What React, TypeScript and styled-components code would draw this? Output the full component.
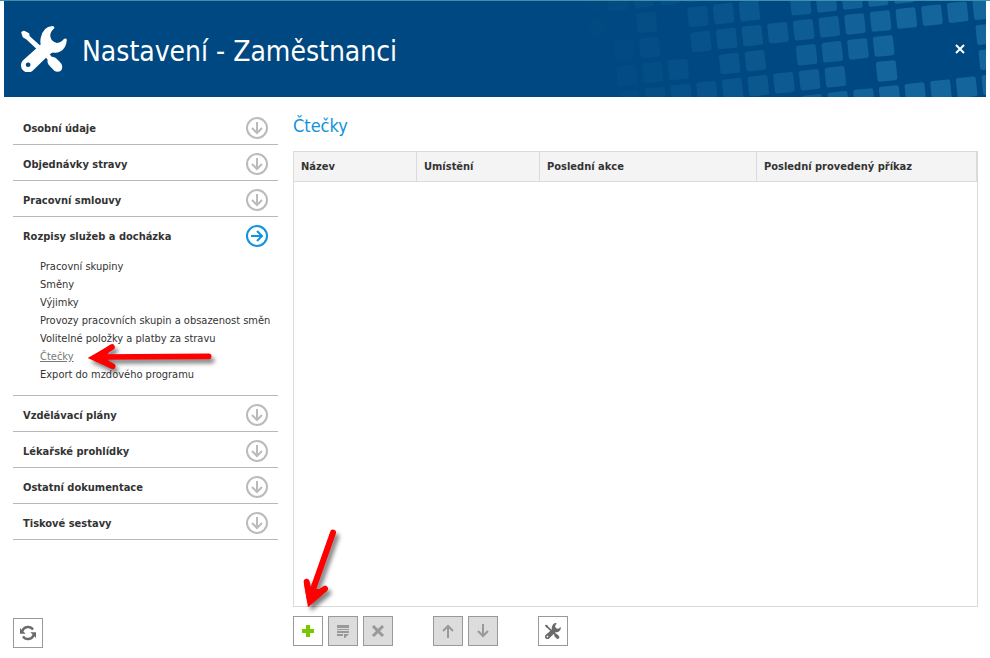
import React from "react";
import styled, { createGlobalStyle } from "styled-components";

const Global = createGlobalStyle`
  * { box-sizing: border-box; }
  body {
    margin: 0;
    background: #fff;
    color: #333;
    font-family: "DejaVu Sans Condensed", "DejaVu Sans", sans-serif;
    font-size: 11px;
  }
  button { font: inherit; color: inherit; cursor: pointer; }
`;

const Page = styled.div`
  display: flex;
  flex-direction: column;
  min-height: 100vh;
  border-top: 1px solid #3c93a8;
`;

const Header = styled.header`
  position: relative;
  display: flex;
  align-items: center;
  gap: 15px;
  height: 96px;
  margin: 0 4px;
  padding: 0 20px 0 17px;
  background: #004881;
  color: #fff;
  overflow: hidden;
`;

const HeaderPattern = styled.svg`
  position: absolute;
  top: 0;
  right: 0;
  width: 396px;
  height: 96px;
`;

const HeaderTitle = styled.h1`
  flex: 1;
  margin: 0;
  padding-top: 5px;
  font-size: 28px;
  line-height: 34px;
  font-weight: 400;
  white-space: nowrap;
`;

const CloseButton = styled.button`
  position: relative;
  display: flex;
  padding: 0;
  border: 0;
  background: none;
`;

const Body = styled.div`
  flex: 1;
  display: flex;
  gap: 15px;
  padding: 12px 12px 10px 13px;
`;

const Sidebar = styled.aside`
  flex: 0 0 265px;
  min-width: 0;
  display: flex;
  flex-direction: column;
  justify-content: space-between;
`;

const Section = styled.div`
  border-bottom: 1px solid #b8b8b8;
`;

const SectionButton = styled.button`
  display: flex;
  align-items: center;
  justify-content: space-between;
  width: 100%;
  height: 35px;
  padding: 2px 10px 0;
  border: 0;
  background: none;
  font-weight: 700;
  text-align: left;
`;

const SectionLabel = styled.span`
  padding-top: 2px;
`;

const SubList = styled.ul`
  margin: 0;
  padding: 6px 0 11px 27px;
  list-style: none;
`;

const SubItem = styled.li`
  position: relative;
  height: 18px;
  line-height: 18px;
  white-space: nowrap;
`;

const SubLink = styled.a<{ $current?: boolean }>`
  color: ${(p) => (p.$current ? "#777" : "#333")};
  text-decoration: ${(p) => (p.$current ? "underline" : "none")};
`;

const Main = styled.main`
  flex: 1;
  min-width: 0;
  display: flex;
  flex-direction: column;
  padding-bottom: 2px;
`;

const PageTitle = styled.h2`
  margin: 0;
  height: 42px;
  color: #0e93de;
  font-size: 18px;
  line-height: 34px;
  font-weight: 400;
`;

const TableFrame = styled.div`
  flex: 1;
  border: 1px solid #dadada;
`;

const Table = styled.table`
  width: 100%;
  table-layout: fixed;
  border-collapse: separate;
  border-spacing: 0;
`;

const HeadCell = styled.th<{ $width?: number }>`
  width: ${(p) => (p.$width ? `${p.$width}px` : "auto")};
  height: 30px;
  padding: 0 7px;
  border-right: 1px solid #dadada;
  border-bottom: 1px solid #dadada;
  background: #f4f4f4;
  font-weight: 700;
  text-align: left;
  white-space: nowrap;
`;

const Toolbar = styled.div`
  display: flex;
  gap: 40px;
  padding-top: 9px;
`;

const ToolGroup = styled.div`
  display: flex;
  gap: 5px;
`;

const ToolButton = styled.button`
  position: relative;
  display: flex;
  align-items: center;
  justify-content: center;
  width: 30px;
  height: 30px;
  padding: 0;
  border: 1px solid #999;
  background: #fff;
  color: #6b6b6b;
  &:disabled {
    background: #dcdcdc;
    color: #999;
    cursor: default;
  }
`;

const Pointer = styled.svg`
  position: absolute;
  overflow: visible;
  pointer-events: none;
  filter: drop-shadow(3px 4px 2px rgba(0, 0, 0, 0.5));
`;

const LinkPointer = styled(Pointer)`
  left: 41px;
  top: -13px;
`;

const AddPointer = styled(Pointer)`
  left: 3px;
  top: -97px;
`;

/* Filled cells of the slanted grid: row number -> column numbers. */
const cells: Record<string, number[]> = {
  "-2": [-11, -10, -9, -8, -7],
  "-1": [-11, -9, -7, -6, -5, -3, -2, -1, 0, 1],
  "0": [-10, -9, -7, -6, -5, -4, -3, -2, -1, 0, 1, 2, 3, 4],
  "1": [-10, -9, -8, -6, -5, -3, -2, -1, 0, 4],
  "2": [-10, -9, -8, -7, -6, -5, -4, -3, -2, 0, 4],
  "3": [-3, -2, -1, 0, 1, 2, 3, 4],
};

const Pattern = () => (
  <HeaderPattern viewBox="0 3 1188 288" aria-hidden="true">
    {Object.entries(cells).flatMap(([row, cols]) =>
      cols.map((i) => {
        const j = Number(row);
        const x = 872 + 77 * i + 9 * j;
        const y = 63 - 8.8 * i + 75 * j;
        const opacity = Math.min(1, Math.max(0.04, x / 900));
        return (
          <rect
            key={`${i}:${j}`}
            x={-30}
            y={-30}
            width={60}
            height={60}
            rx={7}
            fill="#14659c"
            opacity={opacity}
            transform={`translate(${x} ${y}) rotate(-6)`}
          />
        );
      })
    )}
  </HeaderPattern>
);

const ToolsIcon = ({ size }: { size: number }) => (
  <svg width={size} height={size} viewBox="33 32 138 139" fill="currentColor" aria-hidden="true">
    <path
      fillRule="evenodd"
      d="M127 32Q135 33 133 39Q120 50 121 63Q124 80 141 83Q155 81 162 71Q170 67 171 74Q169 99 151 109Q140 115 128 112L119 117L70 165A21 21 0 0 1 38 136L92 88Q90 78 92 68Q99 34 127 32ZM54 142a7 7 0 1 0 .1 0Z"
    />
    <path d="M33 52Q36 45 44 47L57 54L59 63L97 97L87 108L49 73L38 66Z" />
    <path d="M100 117L113 106L124 124L135 127Q141 130 155 147Q160 159 153 167Q143 174 133 167L116 149Q111 142 113 134Z" />
  </svg>
);

const CircleArrow = ({ active }: { active?: boolean }) => (
  <svg width="22" height="22" viewBox="0 0 22 22" fill="none" stroke={active ? "#0e93de" : "#bbb"} strokeWidth="2" aria-hidden="true">
    <circle cx="11" cy="11" r="10" />
    {active ? <path d="M5 11H16M11 6L16 11L11 16" /> : <path d="M11 5V16M6 11L11 16L16 11" />}
  </svg>
);

const RefreshIcon = () => (
  <svg width="16" height="16" viewBox="60 74 48 48" fill="none" stroke="currentColor" strokeWidth="7" aria-hidden="true">
    <path d="M67 92A18 18 0 0 1 99 88M101 104A18 18 0 0 1 69 108" />
    <path d="M60 83V100H77ZM108 113V96H91Z" fill="currentColor" stroke="none" />
  </svg>
);

const PlusIcon = () => (
  <svg width="12" height="12" viewBox="0 0 12 12" aria-hidden="true">
    <path d="M4 0H8V4H12V8H8V12H4V8H0V4H4Z" fill="#78c800" />
  </svg>
);

const NoteIcon = () => (
  <svg width="14" height="14" viewBox="0 0 14 14" fill="currentColor" aria-hidden="true">
    <path d="M1 1H13V4H1ZM1 5H13V6H1ZM1 7H13V9H1ZM1 10H7V12H1ZM8 10H13L9 14H8Z" />
  </svg>
);

const CrossIcon = () => (
  <svg width="14" height="14" viewBox="0 0 14 14" stroke="currentColor" strokeWidth="3" aria-hidden="true">
    <path d="M2 2L12 12M12 2L2 12" />
  </svg>
);

const ArrowIcon = ({ down }: { down?: boolean }) => (
  <svg width="14" height="14" viewBox="0 0 14 14" fill="none" stroke="currentColor" strokeWidth="2" aria-hidden="true">
    <path d={down ? "M7 0V12M2 7L7 12L12 7" : "M7 14V2M2 7L7 2L12 7"} />
  </svg>
);

const subItems = [
  "Pracovní skupiny",
  "Směny",
  "Výjimky",
  "Provozy pracovních skupin a obsazenost směn",
  "Volitelné položky a platby za stravu",
  "Čtečky",
  "Export do mzdového programu",
];

const sections = [
  { label: "Osobní údaje" },
  { label: "Objednávky stravy" },
  { label: "Pracovní smlouvy" },
  { label: "Rozpisy služeb a docházka", items: subItems },
  { label: "Vzdělávací plány" },
  { label: "Lékařské prohlídky" },
  { label: "Ostatní dokumentace" },
  { label: "Tiskové sestavy" },
];

export default function App() {
  return (
    <Page>
      <Global />
      <Header>
        <Pattern />
        <ToolsIcon size={46} />
        <HeaderTitle>Nastavení - Zaměstnanci</HeaderTitle>
        <CloseButton aria-label="Zavřít">
          <svg width="12" height="12" viewBox="0 0 12 12" stroke="#fff" strokeWidth="2" aria-hidden="true">
            <path d="M2 2L10 10M10 2L2 10" />
          </svg>
        </CloseButton>
      </Header>
      <Body>
        <Sidebar>
          <nav>
            {sections.map(({ label, items }) => (
              <Section key={label}>
                <SectionButton aria-expanded={!!items}>
                  <SectionLabel>{label}</SectionLabel>
                  <CircleArrow active={!!items} />
                </SectionButton>
                {items && (
                  <SubList>
                    {items.map((item) => (
                      <SubItem key={item}>
                        <SubLink href="#" $current={item === "Čtečky"}>
                          {item}
                        </SubLink>
                        {item === "Čtečky" && (
                          <LinkPointer width="140" height="45" viewBox="0 0 420 135" fill="none" stroke="#f00" strokeWidth="17" strokeLinecap="round" strokeLinejoin="round" aria-hidden="true">
                            <path d="M60 66L383 64" />
                            <path d="M93 36L45 67L95 94" />
                            <path d="M20 69L90 29L78 65L92 101Z" fill="#f00" stroke="none" />
                          </LinkPointer>
                        )}
                      </SubItem>
                    ))}
                  </SubList>
                )}
              </Section>
            ))}
          </nav>
          <ToolButton aria-label="Obnovit">
            <RefreshIcon />
          </ToolButton>
        </Sidebar>
        <Main>
          <PageTitle>Čtečky</PageTitle>
          <TableFrame>
            <Table>
              <thead>
                <tr>
                  <HeadCell $width={123}>Název</HeadCell>
                  <HeadCell $width={123}>Umístění</HeadCell>
                  <HeadCell $width={217}>Poslední akce</HeadCell>
                  <HeadCell>Poslední provedený příkaz</HeadCell>
                </tr>
              </thead>
            </Table>
          </TableFrame>
          <Toolbar>
            <ToolGroup>
              <ToolButton aria-label="Přidat">
                <PlusIcon />
                <AddPointer width="50" height="90" viewBox="0 0 150 270" fill="none" stroke="#f00" strokeWidth="18" strokeLinecap="round" strokeLinejoin="round" aria-hidden="true">
                  <path d="M108 38L46 214" />
                  <path d="M29 185L38 236L84 206" />
                  <path d="M33 262L21 190L52 205L90 213Z" fill="#f00" stroke="none" />
                </AddPointer>
              </ToolButton>
              <ToolButton aria-label="Upravit" disabled>
                <NoteIcon />
              </ToolButton>
              <ToolButton aria-label="Smazat" disabled>
                <CrossIcon />
              </ToolButton>
            </ToolGroup>
            <ToolGroup>
              <ToolButton aria-label="Posunout nahoru" disabled>
                <ArrowIcon />
              </ToolButton>
              <ToolButton aria-label="Posunout dolů" disabled>
                <ArrowIcon down />
              </ToolButton>
            </ToolGroup>
            <ToolButton aria-label="Nastavení">
              <ToolsIcon size={16} />
            </ToolButton>
          </Toolbar>
        </Main>
      </Body>
    </Page>
  );
}
